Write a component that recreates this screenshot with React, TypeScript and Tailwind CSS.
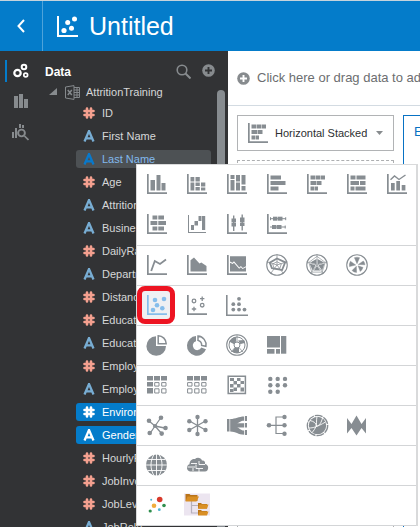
import type { ReactNode } from "react";

function Glyph({ children, className = "h-5 w-5 text-[#878d92]", box = "0 0 20 20" }: { children: ReactNode; className?: string; box?: string }) {
  return (
    <svg viewBox={box} className={className} fill="currentColor" aria-hidden="true">
      {children}
    </svg>
  );
}

const Axis = () => <path d="M0 0h1.7v18.2H20V20H0z" />;

type Box = [number, number, number, number];
const Boxes = ({ list }: { list: Box[] }) => (
  <>
    {list.map(([x, y, w, h], i) => (
      <rect key={i} x={x} y={y} width={w} height={h} />
    ))}
  </>
);

type Dot = [number, number, number];
const Dots = ({ list }: { list: Dot[] }) => (
  <>
    {list.map(([x, y, r], i) => (
      <circle key={i} cx={x} cy={y} r={r} />
    ))}
  </>
);

const axisBoxes = (list: Box[]) => (
  <>
    <Axis />
    <Boxes list={list} />
  </>
);

const horizontalStacked = axisBoxes([
  [3.5, 1.5, 5, 4], [9, 1.5, 4, 4], [13.5, 1.5, 4.5, 4],
  [3.5, 7, 5.5, 4], [9.5, 7, 5, 4],
  [3.5, 12.5, 3.5, 4], [7.5, 12.5, 3.5, 4],
]);

const scatter = (
  <>
    <Axis />
    <Dots list={[[8, 5, 2.3], [17, 4, 2.3], [10, 10.3, 2.3], [15.3, 13.2, 2.3], [6, 15, 2.3]]} />
  </>
);

const pentagon = "M10 2 17.6 7.6 14.8 16.6H5.2L2.4 7.6z";
const spokes = "M10 10V0M10 10 19.5 7M10 10l6 8M10 10l-6 8M10 10 .5 7";

type Chart = { name: string; art: ReactNode };

const sections: Chart[][][] = [
  [
    [
      { name: "Bar", art: axisBoxes([[3.5, 6, 4.5, 10.5], [9.5, 1, 4, 15.5], [14.5, 9, 4, 7.5]]) },
      { name: "Stacked Bar", art: axisBoxes([[3.5, 3, 3.8, 4.5], [3.5, 8.5, 3.8, 8], [8.5, 3, 4.3, 4.5], [8.5, 8.5, 4.3, 3.5], [8.5, 13, 4.3, 3.5], [14, 8.5, 4.3, 4], [14, 13.5, 4.3, 3]]) },
      { name: "100% Stacked Bar", art: axisBoxes([[3.5, 1, 4, 4], [3.5, 6, 4, 10.5], [9, 1, 4, 6.5], [9, 8.5, 4, 8], [14.5, 1, 4, 9.5], [14.5, 12, 4, 4.5]]) },
      { name: "Horizontal Bar", art: axisBoxes([[3.5, 1.5, 10.5, 4], [3.5, 7, 15, 4], [3.5, 12.5, 8, 4]]) },
      { name: "Horizontal Stacked", art: horizontalStacked },
      { name: "Horizontal 100% Stacked", art: axisBoxes([[3.5, 1.5, 5, 4], [9.5, 1.5, 9, 4], [3.5, 7, 8.5, 4], [13, 7, 5.5, 4], [3.5, 12.5, 4, 4], [8.5, 12.5, 10, 4]]) },
      {
        name: "Combo",
        art: (
          <>
            {axisBoxes([[4, 9, 3.7, 7.5], [9.3, 7, 3.7, 9.5], [14.7, 11, 3.7, 5.5]])}
            <path d="M3.5 5.8 7.5 2l4.5 3.5L18.5 1" fill="none" stroke="currentColor" strokeWidth="1.4" />
          </>
        ),
      },
    ],
    [
      { name: "Butterfly", art: axisBoxes([[5.5, 1.5, 4.8, 4], [11.3, 1.5, 5.7, 4], [3.5, 7, 6.8, 4], [11.3, 7, 7.7, 4], [5.5, 12.5, 4.8, 4], [11.3, 12.5, 5.7, 4]]) },
      {
        name: "Waterfall",
        art: (
          <>
            <path d="M1 1h1v17h17v1H1z" />
            <Boxes list={[[4, 11, 3, 5], [7.5, 7, 3.5, 4.5], [11.5, 2, 3, 5], [15, 2, 3.2, 14]]} />
          </>
        ),
      },
      {
        name: "Boxplot",
        art: axisBoxes([[4.5, 4.5, 4.5, 3.5], [4.5, 8.5, 4.5, 4], [6, 1.5, 1.4, 15.5], [13, 3.5, 4.5, 4.5], [13, 8.5, 4.5, 3.5], [14.5, 0.5, 1.4, 16]]),
      },
      {
        name: "Horizontal Boxplot",
        art: axisBoxes([[6, 2.7, 4, 4], [10.5, 2.7, 5, 4], [3, 4.2, 16, 1], [18.2, 3.2, 1, 3], [3, 3.2, 1, 3], [5, 11, 4.5, 4], [10, 11, 4.5, 4], [3, 12.5, 15.5, 1], [17.7, 11.5, 1, 3]]),
      },
    ],
  ],
  [
    [
      {
        name: "Line",
        art: (
          <>
            <Axis />
            <path d="m4.2 16 3.6-10 5.2 3 6-4.5" fill="none" stroke="currentColor" strokeWidth="1.8" />
          </>
        ),
      },
      { name: "Area", art: <><Axis /><path d="M3.5 16.5V5.2L7 2.5l5.5 6 1.8-1L19.5 11v5.5z" /></> },
      {
        name: "100% Area",
        art: (
          <>
            <Axis />
            <path d="M3 1.3h16v9.9l-3.2 1.8-1.9-2-1.6 1.5L7 6.300 5.4 7.8 3 6.6z" />
            <path d="m3 7.700 2.7 1.2 1.2-1.1 5.3 6 1.7-1.6 1.6 1.9 3.5-1.9v4.3H3z" />
          </>
        ),
      },
      {
        name: "Radar Line",
        art: (
          <g fill="none" stroke="currentColor" transform="translate(-.8 -.8) scale(1.08)">
            <circle cx="10" cy="10" r="9.5" />
            <path d={spokes} strokeWidth=".7" />
            <path d="m10 4 7.6 3.5-2.9 7.2L5.3 13l-2-5.2z" strokeWidth="1.7" />
            <path d="m10 7 4 2-1.5 4.5h-5L6 9z" strokeWidth=".7" />
          </g>
        ),
      },
      {
        name: "Radar Area",
        art: (
          <g fill="none" stroke="currentColor" transform="translate(-.8 -.8) scale(1.08)">
            <circle cx="10" cy="10" r="9.5" />
            <path d={pentagon} strokeWidth=".6" />
            <path d="m9.5 4.5.1 4.8L3.7 7.7zM10.5 4.5l.1 4.8 6-1.7zM17 8.5l-5.7 1.8 3.4 4.7zM3 8.5l5.7 1.8L6 15zM10 11l-3 4h6z" fill="currentColor" stroke="none" />
            <path d={spokes} strokeWidth=".6" />
          </g>
        ),
      },
      {
        name: "Radar Bar",
        art: (
          <g fill="none" stroke="currentColor" transform="translate(-.8 -.8) scale(1.08)">
            <circle cx="10" cy="10" r="9.5" />
            <path d="M10 8.8 7.6 3.2a7 7 0 0 1 4.8 0zM11.2 9.5l4.7-3.2q1.3 1.4 1.5 3.5zM11 10.8l4.6 1.5q-1 2.6-2.6 3.7zM9.4 11.1l.2 5.8q-2.6-.1-4.2-1.8zM8.8 10 3 11.5q-.4-3 .9-5z" fill="currentColor" stroke="currentColor" strokeWidth=".4" />
          </g>
        ),
      },
    ],
  ],
  [
    [
      { name: "Scatter", art: scatter },
      {
        name: "Scatter (Category)",
        art: (
          <>
            <Axis />
            <g fill="none" stroke="currentColor" strokeWidth="1.3">
              <circle cx="7" cy="6" r="1.8" />
              <circle cx="15.2" cy="10.2" r="1.8" />
              <path d="M15.2 1.5v4.4M13 3.7h4.4M7 11.8v4.4M4.8 14h4.4" />
            </g>
          </>
        ),
      },
      {
        name: "Stacked Scatter",
        art: (
          <>
            <path d="M-1 0H.6v19.5H21V21H-1z" />
            <Dots list={[[12, 3.8, 1.9], [6.3, 9.2, 1.9], [12, 9.2, 1.9], [6.3, 14.6, 1.9], [12, 14.6, 1.9], [17.5, 14.6, 1.9]]} />
          </>
        ),
      },
    ],
  ],
  [
    [
      {
        name: "Pie",
        art: (
          <>
            <path d="M9 1.2V11h10A9.8 9.8 0 1 1 9 1.2z" />
            <path d="M11.2.8v8h8a8 8 0 0 0-8-8z" fill="none" stroke="currentColor" strokeWidth="1.5" />
          </>
        ),
      },
      {
        name: "Donut",
        art: (
          <>
            <path d="M9 1.1v5.2a4.5 4.5 0 1 0 5.3 6.3l4.7 1.6A9.8 9.8 0 1 1 9 1.1z" />
            <path d="M11 1v4.4a5.2 5.2 0 0 1 3.7 5.1l4.2.8A8.8 8.8 0 0 0 11 1z" fill="none" stroke="currentColor" strokeWidth="1.5" />
          </>
        ),
      },
      {
        name: "Sunburst",
        art: (
          <>
            <g fill="none" stroke="currentColor">
              <circle cx="10" cy="10" r="10.3" strokeWidth="1.1" />
              <circle cx="10" cy="10" r="8" strokeWidth="1" />
              <circle cx="10" cy="10" r="3" strokeWidth="1" />
              <path d="M10 0v7M2 6l5 2.5M18 6l-5 2.5M4 17l4-4.5M16 17l-4-4.5" strokeWidth=".8" />
            </g>
            <path d="M2.5 6.5A8 8 0 0 1 9 2v4.5L7 9zM11 5.5l6-.5.700 3-4.200 1zM7.8 12.5l-2.5 4A8 8 0 0 0 12 17.7V13z" />
          </>
        ),
      },
      { name: "Treemap", art: <Boxes list={[[0, 1, 13, 11.5], [0, 14, 7.5, 4.7], [9, 14, 4, 4.7], [14, 1, 5.3, 17.7]]} /> },
    ],
  ],
  [
    [
      {
        name: "Pivot",
        art: (
          <>
            <Boxes list={[[0, 1, 6, 4.5], [7, 1, 6, 4.5], [14, 1, 6, 4.5], [0, 7, 6, 4.5], [0, 13, 6, 5.5]]} />
            <path d="M7.7 7.6H12v3.5H7.7zm7 0H19v3.5h-4.3zm-7 6.2H12V18H7.7zm7 0H19V18h-4.3z" fill="none" stroke="currentColor" />
          </>
        ),
      },
      {
        name: "Table",
        art: (
          <>
            <Boxes list={[[0, 1, 6, 4.5], [7, 1, 6, 4.5], [14, 1, 6, 4.5]]} />
            <path d="M.6 7.6H5v3.5H.6zm7.1 0H12v3.5H7.7zm7 0H19v3.5h-4.3zM.6 13.8H5V18H.6zm7.1 0H12V18H7.7zm7 0H19V18h-4.3z" fill="none" stroke="currentColor" />
          </>
        ),
      },
      {
        name: "Correlation Matrix",
        art: (
          <>
            <path d="M1.2 1.2h17.2v17.2H1.2z" fill="none" stroke="currentColor" strokeWidth="1.5" />
            <Boxes list={[[3, 3, 4, 3], [10, 3, 3.5, 3], [13.5, 6, 3.5, 3], [6.5, 6, 3.5, 3.5], [10, 9, 3.5, 3.5], [3, 9, 3.5, 3.5], [6.5, 12.5, 3.5, 3.5], [13.5, 12.5, 3.5, 4], [3, 14, 3.5, 3]]} />
          </>
        ),
      },
      {
        name: "Matrix",
        art: (
          <Dots list={[[3.3, 3.9, 2.2], [10.7, 3.9, 2.2], [18, 3.9, 2.2], [3.3, 10.2, 2.2], [10.7, 10.2, 2.2], [18, 10.2, 2.2], [3.3, 16.7, 2.2], [10.7, 16.7, 2.2]]} />
        ),
      },
    ],
  ],
  [
    [
      {
        name: "Network",
        art: (
          <>
            <path d="m8 11 6-8.5M8 11 2 6M8 11l12 2.5M8 11l-5 7.5M8 11l7 8" fill="none" stroke="currentColor" strokeWidth="1.3" />
            <Dots list={[[8, 11, 2.1], [14, 2.7, 2.3], [2, 5.7, 2.3], [18.5, 13, 2.3], [2.7, 18, 2.3], [14.7, 18.6, 2.3]]} />
          </>
        ),
      },
      {
        name: "Circular Network",
        art: (
          <>
            <path d="M10.5 2v17M2.5 6l16 9M18.5 6l-16 9" fill="none" stroke="currentColor" strokeWidth="1.3" />
            <Dots list={[[10.5, 2, 2.2], [10.5, 19, 2.2], [2.3, 6.2, 2.2], [18.5, 6.2, 2.2], [2.3, 15, 2.2], [18.5, 15, 2.2]]} />
          </>
        ),
      },
      {
        name: "Sankey",
        art: (
          <>
            <Boxes list={[[0, 4, 2.5, 12.5], [18, 1, 2, 5], [18, 8, 2, 4.5], [18, 15, 2, 5]]} />
            <path d="M3.2 4c5.8 0 8.3-2.5 14-2.5v4.200c-4 0-5 2.300-7 2.500h7v4.200h-7c2 .3 3 2.800 7 3.100v4.200C11 19.700 9 16.5 3.2 16.5z" />
          </>
        ),
      },
      {
        name: "Tree",
        art: (
          <>
            <path d="M2 10.3h15M17 2H9v16.5h8" fill="none" stroke="currentColor" strokeWidth="1.2" />
            <Dots list={[[2, 10.3, 2.3], [17.5, 2, 2.2], [17.5, 10.3, 2.2], [17.5, 18.7, 2.2]]} />
          </>
        ),
      },
      {
        name: "Chord",
        art: (
          <>
            <circle cx="10.5" cy="10.5" r="10.2" fill="none" stroke="currentColor" strokeWidth="1.3" strokeDasharray="8 1" />
            <circle cx="10.5" cy="10.5" r="8.7" />
            <path d="M3 5.5c4 1 6 2.5 6.5 5.5M10 1.5c-1 5 0 7-1 10-1 2-2 4-4 6M2 13c4 0 8-1 16.5-6M9.5 11c3 0 5-4 6-8" fill="none" stroke="#fff" strokeWidth=".9" />
          </>
        ),
      },
      { name: "Parallel Coordinates", art: <path d="M0 3l4.5 6L9.5.5l5 8.5L19 3v15.5l-4.5-5.5-5 7.5-5-7.5L0 18.500z" /> },
    ],
  ],
  [
    [
      {
        name: "Map",
        art: (
          <>
            <circle cx="9.5" cy="10" r="10.5" />
            <path d="M9.5-1v22M-1 10h21M1 4.5h17M1 15.5h17M7-.5c-4 6-4 15 0 21M12-.5c4 6 4 15 0 21" fill="none" stroke="#fff" strokeWidth=".9" />
          </>
        ),
      },
      {
        name: "Tag Cloud",
        art: (
          <g transform="translate(0 1)">
            <path d="M3 15.5a3.800 3.800 0 0 1-.5-7.300C2.500 4 6 2.500 8 3c2-2 6-1.500 7 1.500 2-.5 3.500 1 3 3.500 4.500.5 4 7.500 0 7.500z" />
            <path d="M4 7.5h6M12 5v3.500h6M.5 11H8M9 8.500v4h7M6 12v3M12 12.500V16" fill="none" stroke="#fff" strokeWidth=".9" />
          </g>
        ),
      },
    ],
  ],
  [
    [
      {
        name: "Bubble Plugin",
        art: (
          <>
            <circle cx="12.7" cy="4.5" r="2.8" fill="#d8392b" />
            <circle cx="7" cy="10.7" r="2.3" fill="#f0ad3c" />
            <circle cx="17" cy="10.5" r="1.8" fill="#2f8f4e" />
            <circle cx="3.2" cy="16" r="1.6" fill="#2f8f4e" />
            <circle cx="12.3" cy="14.7" r="1.4" fill="#4fb3cc" />
            <circle cx="4.2" cy="4.8" r="1" fill="#4fb3cc" />
          </>
        ),
      },
      {
        name: "Folder Tree Plugin",
        art: (
          <>
            <path d="M-3-1.5h26v22H-3z" fill="#ece5f0" />
            <path d="M4.5 6v12H12M4.5 10.5H12" fill="none" stroke="#b7b1bd" strokeWidth="1.2" />
            <path d="M-1.5-1h4l1 1h7v6h-12zM11 8h3l1 1h5v4.500h-9zM11 15h3l1 1h5v4h-9z" fill="#b9741a" />
            <path d="M.5 1.500H12L9.500 6.500h-11zM12.500 9.500h9L20 13.800h-9zM12.500 16.500h9L20 20.500h-9z" fill="#d98f25" />
          </>
        ),
      },
    ],
  ],
];

type Field = { label: string; kind: "number" | "text"; state?: "hover" | "on" };

const fields: Field[] = [
  { label: "ID", kind: "number" },
  { label: "First Name", kind: "text" },
  { label: "Last Name", kind: "text", state: "hover" },
  { label: "Age", kind: "number" },
  { label: "Attrition", kind: "text" },
  { label: "BusinessTravel", kind: "text" },
  { label: "DailyRate", kind: "number" },
  { label: "Department", kind: "text" },
  { label: "DistanceFromHome", kind: "number" },
  { label: "Education", kind: "number" },
  { label: "EducationField", kind: "text" },
  { label: "EmployeeCount", kind: "number" },
  { label: "EmployeeNumber", kind: "text" },
  { label: "Environment", kind: "number", state: "on" },
  { label: "Gender", kind: "text", state: "on" },
  { label: "HourlyRate", kind: "number" },
  { label: "JobInvolvement", kind: "number" },
  { label: "JobLevel", kind: "number" },
  { label: "JobRole", kind: "text" },
];

function FieldRow({ label, kind, state }: Field) {
  const row =
    state === "on" ? "bg-[#047cca] text-white" : state === "hover" ? "bg-[#4d5154] text-[#82b9ee]" : "text-[#d6d7d8]";
  const tint =
    state === "on" ? "text-white" : state === "hover" ? "text-[#0879cc]" : kind === "number" ? "text-[#f4a08f]" : "text-[#78add3]";
  return (
    <li>
      <button className={`flex h-[18px] w-full items-center gap-[7px] rounded-[3px] pl-[7px] text-left whitespace-nowrap ${row}`}>
        <Glyph className={`h-3 w-3 shrink-0 ${tint}`} box="0 0 12 12">
          {kind === "number" ? (
            <path d="M4 1.500v9M8 1.500v9M1.500 4h9M1.500 8h9" fill="none" stroke="currentColor" strokeWidth="2.600" strokeLinecap="round" />
          ) : (
            <path d="M1.500 11.500 6 1l4.500 10.500M3 8.300h6" fill="none" stroke="currentColor" strokeWidth="2.300" />
          )}
        </Glyph>
        <span>{label}</span>
      </button>
    </li>
  );
}

function AddIcon({ mark }: { mark: string }) {
  return (
    <Glyph className="h-[13px] w-[13px] shrink-0 text-[#878b8e]" box="0 0 13 13">
      <circle cx="6.5" cy="6.5" r="6.3" />
      <path d="M6.5 3v7M3 6.5h7" stroke={mark} strokeWidth="1.9" />
    </Glyph>
  );
}

function Rail() {
  return (
    <nav className="flex w-[42px] shrink-0 flex-col pt-[9px]">
      <button aria-label="Data" className="ml-[5px] flex h-[22px] items-center border-l-2 border-[#047cca] pl-[6px] text-white">
        <Glyph className="h-4 w-4" box="0 0 16 16">
          <g fill="none" stroke="currentColor">
            <circle cx="4.5" cy="10" r="3.2" strokeWidth="2.2" />
            <circle cx="11" cy="4" r="2.3" strokeWidth="2" />
            <circle cx="12.7" cy="12" r="1.9" strokeWidth="1.7" />
          </g>
        </Glyph>
      </button>
      <button aria-label="Visualizations" className="mt-[11px] pl-[13px] text-[#878b8e]">
        <Glyph className="h-4 w-4" box="0 0 16 16">
          <Boxes list={[[1, 3, 4, 12], [6, 1, 4, 14], [11, 6, 4, 9]]} />
        </Glyph>
      </button>
      <button aria-label="Analytics" className="mt-[14px] pl-[11px] text-[#878b8e]">
        <Glyph className="h-[18px] w-[18px]" box="0 0 18 18">
          <Boxes list={[[1, 9, 2, 6], [4, 5, 2, 10], [8, 1, 2, 4], [11, 2, 2, 3]]} />
          <circle cx="10.5" cy="10" r="3.4" fill="none" stroke="currentColor" strokeWidth="1.9" />
          <path d="m13.5 13 4 4" stroke="currentColor" strokeWidth="1.7" />
        </Glyph>
      </button>
    </nav>
  );
}

function DataPanel() {
  return (
    <section className="min-w-0 flex-1 pr-[3px]">
      <div className="flex h-8 items-start gap-[11px] pt-[13px] pr-[10px] pl-[3px]">
        <h2 className="flex-1 text-[12px] leading-4 font-bold text-white">Data</h2>
        <button aria-label="Search">
          <Glyph className="h-[15px] w-[15px] text-[#878b8e]" box="0 0 15 15">
            <circle cx="6" cy="6" r="4.8" fill="none" stroke="currentColor" strokeWidth="1.6" />
            <path d="m9.5 9.5 5 5" stroke="currentColor" strokeWidth="2" />
          </Glyph>
        </button>
        <button aria-label="Add data">
          <AddIcon mark="#323335" />
        </button>
      </div>
      <div className="flex justify-between">
        <div className="min-w-0 flex-1">
          <button className="flex h-[18px] items-center pl-[7px] text-[#d6d7d8]">
            <Glyph className="h-2 w-2 text-[#878b8e]" box="0 0 8 8">
              <path d="M8 0v7H0z" />
            </Glyph>
            <Glyph className="ml-2 h-[15px] w-[15px] text-[#85898c]" box="0 0 15 15">
              <path d="M.5 2 9 .6v13.800L.5 13zM9 2.500h5.500v10H9M9 5h5.500M9 7.500h5.500M9 10h5.500M12 2.500v10" fill="none" stroke="currentColor" />
              <path d="m2.800 5 4 5M6.800 5l-4 5" stroke="currentColor" strokeWidth="1.500" />
            </Glyph>
            <span className="ml-[6px]">AttritionTraining</span>
          </button>
          <ul className="mt-[3px] mr-[6px] ml-[34px] flex flex-col gap-[5px]">
            {fields.map((f) => (
              <FieldRow key={f.label} {...f} />
            ))}
          </ul>
        </div>
        <div className="mt-[7px] w-2 shrink-0 rounded-t bg-[#878c90]" />
      </div>
    </section>
  );
}

function Canvas() {
  return (
    <main className="min-w-0 flex-1 overflow-hidden bg-white">
      <button className="flex h-[55px] w-full items-center gap-[7px] border-b border-[#d3dbe2] pl-[9px] text-[13px] whitespace-nowrap text-[#6c6e70]">
        <AddIcon mark="#fff" />
        <span>Click here or drag data to add a filter</span>
      </button>
      <div className="flex gap-[9px] pt-[9px] pl-[9px]">
        <div className="w-[157px] shrink-0">
          <button className="flex h-9 w-full items-center border border-[#b1b3b5] px-[10px] text-[#2d2f31]">
            <Glyph>{horizontalStacked}</Glyph>
            <span className="ml-[7px] flex-1 text-left">Horizontal Stacked</span>
            <Glyph className="h-1 w-[7px] text-[#878b8e]" box="0 0 7 4">
              <path d="M0 0h7L3.500 4z" />
            </Glyph>
          </button>
          <div className="mt-[9px] h-96 border border-dashed border-[#adafb1]" />
        </div>
        <div className="w-[300px] shrink-0 border border-[#0872c4] px-[10px] pt-[6px] text-[13px] text-[#0872c4]">Environment</div>
      </div>
    </main>
  );
}

function ChartMenu() {
  return (
    <div
      role="menu"
      className="absolute top-[164px] right-0.5 left-[136px] border-t border-r-2 border-l border-[#d9dadb] bg-white"
    >
      {sections.map((rows, s) => (
        <div key={s} className={`flex flex-col gap-5 border-b border-[#d3d5d7] pt-[9px] ${s === 0 ? "pb-[11px]" : "pb-[10px]"}`}>
          {rows.map((row, r) => (
            <div key={r} className="flex gap-5 pl-[10px]">
              {row.map(({ name, art }) => (
                <button key={name} role="menuitem" aria-label={name} className="relative h-5 w-5">
                  {name === "Scatter" && (
                    <span className="absolute -inset-y-[9px] right-[-8px] left-[-10px] rounded-[8px] border-[5px] border-[#ed1422] bg-[#eff0f3]" />
                  )}
                  <Glyph className={`relative h-5 w-5 overflow-visible ${name === "Scatter" ? "text-[#86bdeb]" : "text-[#878d92]"}`}>{art}</Glyph>
                </button>
              ))}
            </div>
          ))}
        </div>
      ))}
    </div>
  );
}

export default function App() {
  return (
    <div className="relative flex h-screen flex-col overflow-hidden bg-[#323335] font-['Liberation_Sans',Arial,sans-serif] text-[11px]">
      <header className="flex h-[51px] shrink-0 border-t border-[#c5d3dc] bg-[#047cca] text-white">
        <button aria-label="Back" className="flex w-[43px] items-center justify-center border-r border-[#4ea3da]">
          <Glyph className="h-[14px] w-2" box="0 0 8 14">
            <path d="M7 1 1.500 7 7 13" fill="none" stroke="currentColor" strokeWidth="2" />
          </Glyph>
        </button>
        <div className="flex items-center gap-[11px] pl-[14px]">
          <Glyph className="h-[21px] w-[21px]" box="0 0 21 21">
            <path d="M0 0h2v19h19v2H0z" />
            <Dots list={[[10.7, 6.5, 2.5], [17.5, 3, 2.5], [7, 14.5, 2.6], [14.5, 12.3, 2.5]]} />
          </Glyph>
          <h1 className="pt-0.5 text-[25px]">Untitled</h1>
        </div>
      </header>
      <div className="flex min-h-0 flex-1">
        <aside className="flex w-[228px] shrink-0 overflow-hidden">
          <Rail />
          <DataPanel />
        </aside>
        <Canvas />
      </div>
      <ChartMenu />
    </div>
  );
}
